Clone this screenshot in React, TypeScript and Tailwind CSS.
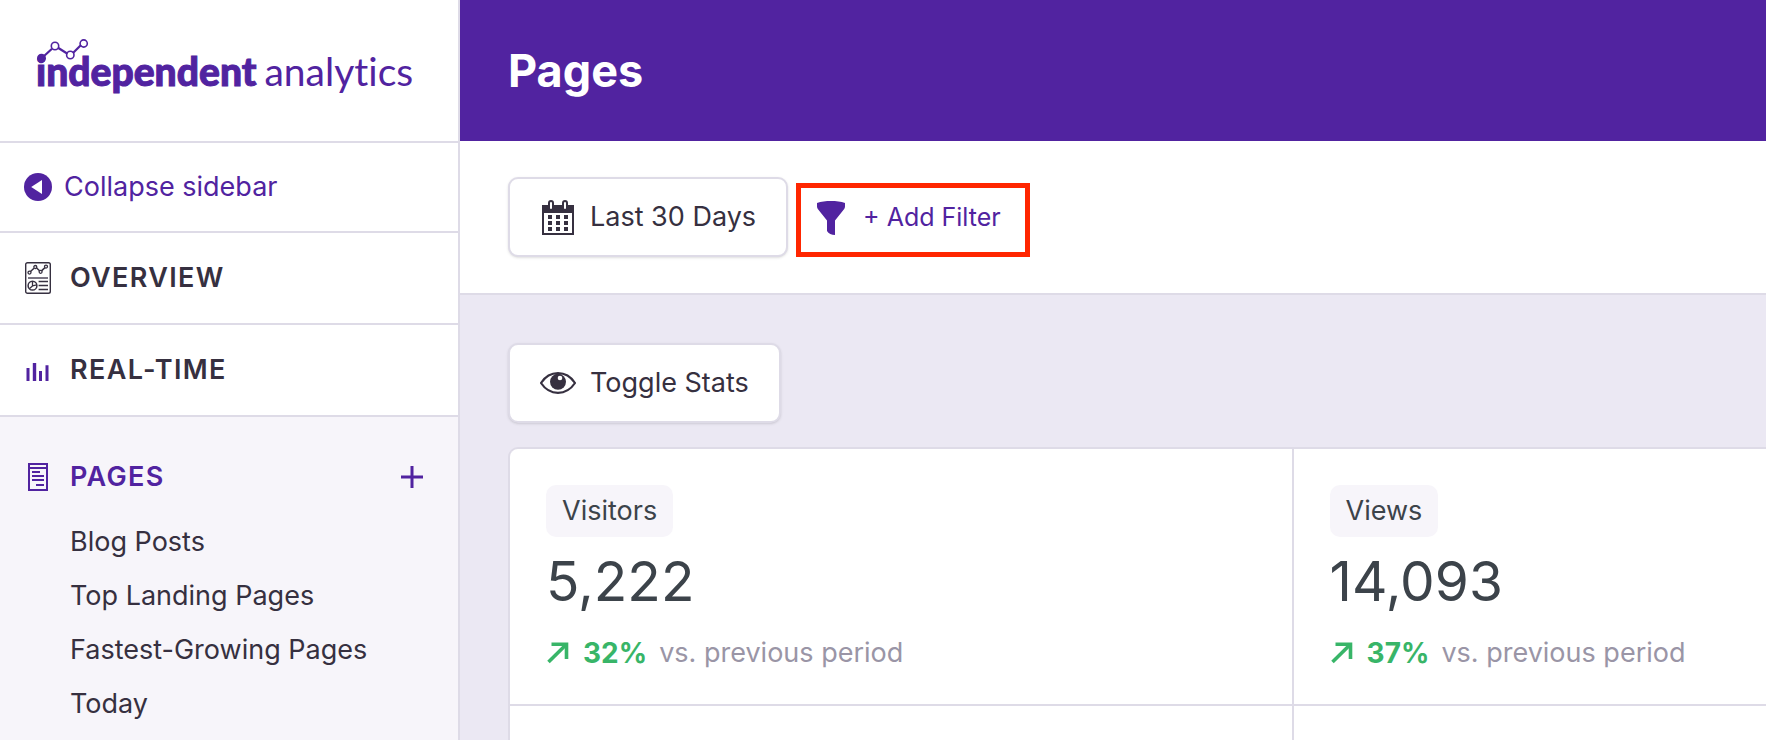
import React from 'react';

type IconProps = {
  className?: string;
};

type StatProps = {
  label: string;
  value: string;
  change: string;
};

const pageReports = ['Blog Posts', 'Top Landing Pages', 'Fastest-Growing Pages', 'Today'];

const stats: StatProps[] = [
  { label: 'Visitors', value: '5,222', change: '32%' },
  { label: 'Views', value: '14,093', change: '37%' },
];

const CollapseIcon: React.FC<IconProps> = ({ className }) => (
  <svg className={className} viewBox="0 0 28 28" aria-hidden="true">
    <circle cx="14" cy="14" r="14" fill="currentColor" />
    <path d="M7.2 14 18 7v14z" fill="#fff" />
  </svg>
);

const OverviewIcon: React.FC<IconProps> = ({ className }) => (
  <svg className={className} viewBox="0 0 26 32" fill="none" stroke="currentColor" aria-hidden="true">
    <rect x="0.7" y="0.7" width="24.6" height="30.6" rx="1.8" strokeWidth="1.4" />
    <path d="M5.5 9.5 9 6.2M11.6 6 14.6 8.8M16.7 8.6 20 5.6" strokeWidth="1.5" />
    <circle cx="4.5" cy="10.6" r="1.5" strokeWidth="1.3" />
    <circle cx="10.3" cy="5" r="1.5" strokeWidth="1.3" />
    <circle cx="15.6" cy="9.8" r="1.5" strokeWidth="1.3" />
    <circle cx="21" cy="4.6" r="1.5" strokeWidth="1.3" />
    <path d="M3 16h20" strokeWidth="1.8" stroke="#6b6675" />
    <circle cx="7.5" cy="23.7" r="4.4" strokeWidth="1.5" />
    <path d="M7.5 19.3v4.6l-3.2 2.9M7.5 23.9l4.2-1" strokeWidth="1.3" />
    <path d="M13.6 19.5H23M13.6 23.5H23M13.6 27.5H23" strokeWidth="1.3" />
  </svg>
);

const BarsIcon: React.FC<IconProps> = ({ className }) => (
  <svg className={className} viewBox="0 0 24 20" fill="currentColor" aria-hidden="true">
    <path d="M.5 6h3v13h-3zM6.8 1h3.4v18H6.8zM13 9h3v10h-3zM19.5 3.2h3V19h-3z" />
  </svg>
);

const PageIcon: React.FC<IconProps> = ({ className }) => (
  <svg className={className} viewBox="0 0 20 28" fill="none" stroke="currentColor" strokeWidth="2" aria-hidden="true">
    <path d="M1 1h18v26H1zM1 5h18M4 9h8M4 13h12M4 17h12M8 22h8" />
  </svg>
);

const PlusIcon: React.FC<IconProps> = ({ className }) => (
  <svg className={className} viewBox="0 0 22 22" stroke="currentColor" strokeWidth="3" aria-hidden="true">
    <path d="M11 0v22M0 11h22" />
  </svg>
);

const CalendarIcon: React.FC<IconProps> = ({ className }) => (
  <svg className={className} viewBox="0 0 32 35" aria-hidden="true">
    <path d="M0 5h32v30H0zM2 13v20h28V13z" fill="currentColor" fillRule="evenodd" />
    <rect x="7" y="1" width="4" height="9" rx="2" fill="#fff" stroke="currentColor" strokeWidth="2" />
    <rect x="21" y="1" width="4" height="9" rx="2" fill="#fff" stroke="currentColor" strokeWidth="2" />
    <path
      d="M6 15h4v4H6zM14 15h4v4h-4zM22 15h4v4h-4zM6 21h4v4H6zM14 21h4v4h-4zM22 21h4v4h-4zM6 27h4v4H6zM14 27h4v4h-4zM22 27h4v4h-4z"
      fill="currentColor"
    />
  </svg>
);

const FunnelIcon: React.FC<IconProps> = ({ className }) => (
  <svg className={className} viewBox="0 0 28 34" fill="currentColor" aria-hidden="true">
    <path d="M0 2C4 .5 9 0 14 0s10 .5 14 2v3.500c0 1-.4 1.800-1 2.700L18 19.500V34c-3.500 0-6.500-1.200-8-4V19.500L1 8.200C.4 7.300 0 6.500 0 5.500z" />
  </svg>
);

const EyeIcon: React.FC<IconProps> = ({ className }) => (
  <svg className={className} viewBox="0 0 36 22" aria-hidden="true">
    <path
      d="M1 11C5 5 11 1.200 18 1.200S31 5 35 11c-4 6-10 9.800-17 9.800S5 17 1 11z"
      fill="none"
      stroke="currentColor"
      strokeWidth="2.2"
    />
    <circle cx="18" cy="9.800" r="8" fill="currentColor" />
    <circle cx="20" cy="6" r="2.300" fill="#fff" />
  </svg>
);

const ArrowIcon: React.FC<IconProps> = ({ className }) => (
  <svg className={className} viewBox="0 0 22 22" fill="none" stroke="currentColor" strokeWidth="3.600" aria-hidden="true">
    <path d="M1.500 20 19 2.700" />
    <path d="M4.500 2.200h15V17" />
  </svg>
);

const Logo: React.FC = () => (
  <a
    href="#home"
    className="relative flex gap-2 font-[Lato,sans-serif] text-[39px] leading-[48px] whitespace-nowrap text-[#5123a0] [font-variant-ligatures:none]"
  >
    <span className="font-black [-webkit-text-stroke:1px_#5123a0]">independent</span>
    <span>analytics</span>
    <svg className="absolute -top-2 left-0 h-6 w-14" viewBox="0 0 56 24" fill="none" stroke="currentColor" aria-hidden="true">
      <path d="M7.500 17.500 16 9.800M22 8.700l9.500 6M37 14l8-8" strokeWidth="2.2" />
      <circle cx="5.500" cy="19.200" r="4.500" fill="currentColor" stroke="none" />
      <circle cx="19" cy="7" r="3.700" strokeWidth="1.600" />
      <circle cx="34.300" cy="16" r="3.700" strokeWidth="1.600" />
      <circle cx="47.700" cy="4.500" r="3.600" strokeWidth="1.600" />
    </svg>
  </a>
);

const Stat: React.FC<StatProps> = ({ label, value, change }) => (
  <div className="w-3/5 shrink-0 border-r-2 border-b-2 border-[#dedbe7] p-9 pb-[31px] text-[#3c434a]">
    <span className="inline-block rounded-[10px] bg-[#f7f5fa] px-4 py-2 leading-9">{label}</span>
    <p className="mt-2 text-[55px] leading-[72px]">{value}</p>
    <p className="mt-4 flex items-center leading-10">
      <ArrowIcon className="mr-[14px] ml-px h-[22px] w-[22px] text-[#38b568]" />
      <span className="mr-3 text-[28px] font-bold text-[#38b568]">{change}</span>
      <span className="text-[#9a95a6]">vs. previous period</span>
    </p>
  </div>
);

const App: React.FC = () => {
  return (
    <div className="flex h-screen overflow-hidden bg-white font-[Inter,sans-serif] text-[27px] text-[#363040]">
      <aside className="w-[460px] shrink-0 overflow-hidden border-r-2 border-[#dedbe7]">
        <div className="flex h-[143px] items-center border-b-2 border-[#dedbe7] px-9">
          <Logo />
        </div>
        <button
          type="button"
          className="flex h-[90px] w-full items-center gap-3 border-b-2 border-[#dedbe7] px-6 text-[#5123a0]"
        >
          <CollapseIcon className="h-7 w-7" />
          Collapse sidebar
        </button>
        <nav>
          <a
            href="#overview"
            className="flex h-[92px] items-center border-b-2 border-[#dedbe7] px-6 font-semibold tracking-wider"
          >
            <span className="mr-[18px] flex w-7 justify-center">
              <OverviewIcon className="h-8 w-[26px]" />
            </span>
            OVERVIEW
          </a>
          <a
            href="#real-time"
            className="flex h-[92px] items-center border-b-2 border-[#dedbe7] px-6 font-semibold tracking-wider"
          >
            <span className="mr-[18px] flex w-7 justify-center pt-1">
              <BarsIcon className="h-5 w-6 text-[#5123a0]" />
            </span>
            REAL-TIME
          </a>
          <div className="h-screen bg-[#f7f5fa] pt-9">
            <div className="flex h-12 items-center px-6 pr-[35px] text-[#5123a0]">
              <a href="#pages" className="flex flex-1 items-center font-semibold tracking-wider">
                <span className="mr-[18px] flex w-7 justify-center">
                  <PageIcon className="h-7 w-5" />
                </span>
                PAGES
              </a>
              <button type="button" aria-label="Add report">
                <PlusIcon className="h-[22px] w-[22px]" />
              </button>
            </div>
            <ul className="mt-[14px] pl-[70px]">
              {pageReports.map((name) => (
                <li key={name} className="leading-[54px]">
                  <a href="#report">{name}</a>
                </li>
              ))}
            </ul>
          </div>
        </nav>
      </aside>

      <main className="min-w-0 flex-1 overflow-hidden bg-[#ebe8f3]">
        <header className="flex h-[141px] items-center bg-[#5123a0] px-12">
          <h1 className="text-[45px] font-bold text-white">Pages</h1>
        </header>

        <div className="flex items-end gap-2 border-b-2 border-[#dedbe7] bg-white px-12 py-9">
          <button
            type="button"
            className="flex h-20 items-center gap-4 rounded-[10px] border-2 border-[#dedbe7] bg-white pr-[30px] pl-8 shadow-sm"
          >
            <CalendarIcon className="h-[35px] w-8" />
            Last 30 Days
          </button>
          <div className="border-[5px] border-[#ff2600]">
            <button
              type="button"
              className="flex h-16 items-center gap-[18px] pr-6 pb-1 pl-4 text-[25px] text-[#5123a0]"
            >
              <FunnelIcon className="h-[34px] w-7" />
              + Add Filter
            </button>
          </div>
        </div>

        <div className="pt-12 pl-12">
          <button
            type="button"
            className="flex h-20 items-center gap-[14px] rounded-[10px] border-2 border-[#dedbe7] bg-white px-[30px] shadow-sm"
          >
            <EyeIcon className="h-[22px] w-9" />
            Toggle Stats
          </button>
        </div>

        <section className="mt-6 pl-12">
          <div className="-mr-[50px] h-screen rounded-tl-[10px] border-t-2 border-l-2 border-[#dedbe7] bg-white">
            <div className="flex">
              {stats.map((stat) => (
                <Stat key={stat.label} {...stat} />
              ))}
            </div>
            <div className="h-full w-3/5 border-r-2 border-[#dedbe7]" />
          </div>
        </section>
      </main>
    </div>
  );
};

export default App;
